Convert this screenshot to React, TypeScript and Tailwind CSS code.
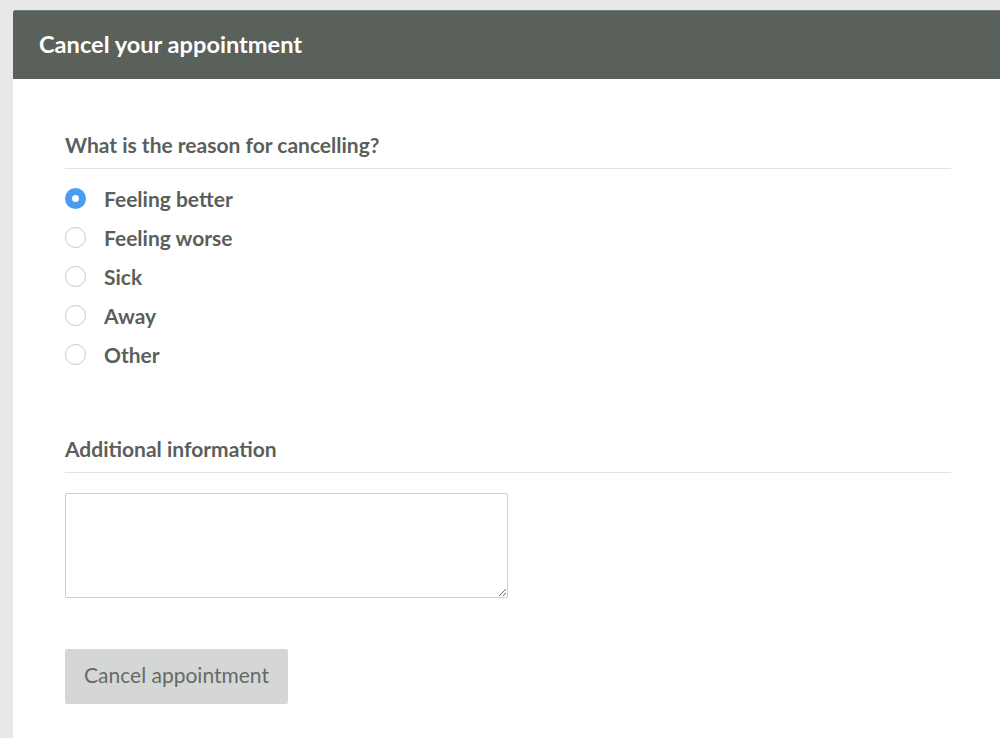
import { useState } from 'react'

const REASONS = ['Feeling better', 'Feeling worse', 'Sick', 'Away', 'Other']

export default function App() {
  const [reason, setReason] = useState('Feeling better')
  const [info, setInfo] = useState('')

  return (
    <div className="min-h-[738px] bg-[#e8e8e8] pl-[13px] pt-[10px] font-['Lato',sans-serif] overflow-hidden">
      <div className="min-h-[728px] bg-white rounded-tl-[3px] overflow-hidden">
        <div className="h-[69px] bg-[#5a615b] border-t border-[#777d78] flex items-center pl-[26px]">
          <h1 className="text-[23.6px] font-bold text-white">Cancel your appointment</h1>
        </div>

        <div className="pl-[52px] pr-[49px] pt-[53px]">
          <h2 className="text-[21px] font-bold text-[#5b5f5c] pb-[10px] border-b border-[#e2e2e2] leading-[26px]">
            What is the reason for cancelling?
          </h2>

          <ul className="mt-[10px] flex flex-col">
            {REASONS.map((r) => {
              const checked = r === reason
              return (
                <li key={r} className="h-[39px] flex items-center">
                  <button
                    type="button"
                    onClick={() => setReason(r)}
                    className="flex items-center gap-[18px] cursor-pointer"
                  >
                    <span
                      className={
                        checked
                          ? 'size-[21px] rounded-full bg-[#4a9bf5] flex items-center justify-center'
                          : 'size-[21px] rounded-full border border-[#c8c8c8] bg-white'
                      }
                    >
                      {checked && <span className="size-[7px] rounded-full bg-white" />}
                    </span>
                    <span className="text-[21px] font-bold text-[#5b5f5c]">{r}</span>
                  </button>
                </li>
              )
            })}
          </ul>

          <h2 className="mt-[62px] text-[21px] font-bold text-[#5b5f5c] pb-[10px] border-b border-[#e2e2e2] leading-[26px]">
            Additional information
          </h2>

          <textarea
            value={info}
            onChange={(e) => setInfo(e.target.value)}
            className="block mt-[20px] w-[443px] h-[105px] border border-[#cfcfcf] rounded-[2px] bg-white outline-none"
          />

          <button
            type="button"
            className="mt-[51px] w-[223px] h-[55px] pb-[3px] bg-[#d5d7d6] rounded-[2px] text-[21px] text-[#666a67]"
          >
            Cancel appointment
          </button>
        </div>
      </div>
    </div>
  )
}
